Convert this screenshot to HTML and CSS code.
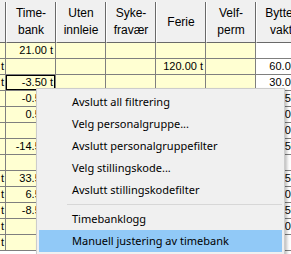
FILE: index.html
```html
<!DOCTYPE html>
<html lang="en">

<head>
    <meta charset="UTF-8">
    <title>Timebank</title>
    <link rel="stylesheet" href="styles.css">
</head>

<body>
    <div class="sheet">
        <div class="row head">
            <div class="cell"></div>
            <div class="cell">Time-<br>bank</div>
            <div class="cell">Uten<br>innleie</div>
            <div class="cell">Syke-<br>fravær</div>
            <div class="cell">Ferie</div>
            <div class="cell">Velf-<br>perm</div>
            <div class="cell">Bytte-<br>vakt</div>
        </div>
        <div class="row">
            <div class="cell"></div><div class="cell">21.00 t</div><div class="cell"></div><div class="cell"></div><div class="cell"></div><div class="cell"></div><div class="cell white"></div>
        </div>
        <div class="row">
            <div class="cell">t</div><div class="cell"></div><div class="cell"></div><div class="cell"></div><div class="cell">120.00 t</div><div class="cell"></div><div class="cell white">60.00 t</div>
        </div>
        <div class="row">
            <div class="cell">t</div><div class="cell focus">-3.50 t</div><div class="cell"></div><div class="cell"></div><div class="cell"></div><div class="cell"></div><div class="cell white">30.00 t</div>
        </div>
        <div class="row">
            <div class="cell"></div><div class="cell">-0.50 t</div><div class="cell"></div><div class="cell"></div><div class="cell"></div><div class="cell"></div><div class="cell white">22.50 t</div>
        </div>
        <div class="row">
            <div class="cell"></div><div class="cell">0.50 t</div><div class="cell"></div><div class="cell"></div><div class="cell"></div><div class="cell"></div><div class="cell white">15.00 t</div>
        </div>
        <div class="row">
            <div class="cell"></div><div class="cell"></div><div class="cell"></div><div class="cell"></div><div class="cell"></div><div class="cell"></div><div class="cell white">30.00 t</div>
        </div>
        <div class="row">
            <div class="cell"></div><div class="cell">-14.50 t</div><div class="cell"></div><div class="cell"></div><div class="cell"></div><div class="cell"></div><div class="cell white">37.50 t</div>
        </div>
        <div class="row">
            <div class="cell"></div><div class="cell"></div><div class="cell"></div><div class="cell"></div><div class="cell"></div><div class="cell"></div><div class="cell white"></div>
        </div>
        <div class="row">
            <div class="cell">t</div><div class="cell">33.50 t</div><div class="cell"></div><div class="cell"></div><div class="cell"></div><div class="cell"></div><div class="cell white">22.50 t</div>
        </div>
        <div class="row">
            <div class="cell">t</div><div class="cell">6.50 t</div><div class="cell"></div><div class="cell"></div><div class="cell"></div><div class="cell"></div><div class="cell white">30.00 t</div>
        </div>
        <div class="row">
            <div class="cell">t</div><div class="cell">-8.50 t</div><div class="cell"></div><div class="cell"></div><div class="cell"></div><div class="cell"></div><div class="cell white">17.50 t</div>
        </div>
        <div class="row">
            <div class="cell">t</div><div class="cell"></div><div class="cell"></div><div class="cell"></div><div class="cell"></div><div class="cell"></div><div class="cell white">45.00 t</div>
        </div>
        <div class="row">
            <div class="cell">t</div><div class="cell"></div><div class="cell"></div><div class="cell"></div><div class="cell"></div><div class="cell"></div><div class="cell white"></div>
        </div>
    </div>

    <div class="menu">
        <div class="item">Avslutt all filtrering</div>
        <div class="item">Velg personalgruppe...</div>
        <div class="item">Avslutt personalgruppefilter</div>
        <div class="item">Velg stillingskode...</div>
        <div class="item">Avslutt stillingskodefilter</div>
        <div class="sep"></div>
        <div class="item">Timebanklogg</div>
        <div class="item active">Manuell justering av timebank</div>
    </div>
</body>

</html>
```

FILE: styles.css
```css
html,
body {
    margin: 0;
    width: 291px;
    height: 254px;
    overflow: hidden;
    background: #ffffff;
}

body {
    font-family: "Liberation Sans", Arial, sans-serif;
    color: #000000;
    position: relative;
}

.sheet {
    padding-top: 2px;
    background: #f0f0f0;
    width: 306px;
}

.row {
    display: grid;
    grid-template-columns: 6px repeat(6, 50px);
    height: 16px;
}

.cell {
    box-sizing: border-box;
    border-right: 1px solid #7f7f7f;
    border-bottom: 1px solid #7f7f7f;
    background: #ffffd2;
    font-size: 11px;
    line-height: 15px;
    text-align: right;
    padding-right: 2px;
    white-space: nowrap;
    overflow: hidden;
}

.row .cell:first-child {
    padding-right: 1px;
}

.cell.white {
    background: #ffffff;
}

.cell.focus {
    box-shadow: inset 0 0 0 1px #000000;
}

.head {
    height: 41px;
}

.head .cell {
    background: #f0f0f0;
    font-size: 12px;
    line-height: 17px;
    text-align: center;
    padding: 0;
    display: flex;
    align-items: center;
    justify-content: center;
    border-left: 1px solid #ffffff;
    border-bottom-color: #696969;
    border-right-color: #696969;
}

.head .cell:first-child {
    border-left: none;
}

.menu {
    position: absolute;
    left: 36px;
    top: 88px;
    width: 249px;
    box-sizing: border-box;
    padding: 2px;
    background: #f0f0f0;
    border: 1px solid #cccccc;
    box-shadow: 2px 2px 3px rgba(0, 0, 0, 0.25);
    font-family: "Noto Sans", sans-serif;
    font-size: 11px;
}

.item {
    height: 22px;
    line-height: 22px;
    padding-left: 33px;
    white-space: nowrap;
}

.item.active {
    background: #91c9f7;
}

.sep {
    height: 1px;
    margin: 3px 0 3px 28px;
    background: #d7d7d7;
}
```
